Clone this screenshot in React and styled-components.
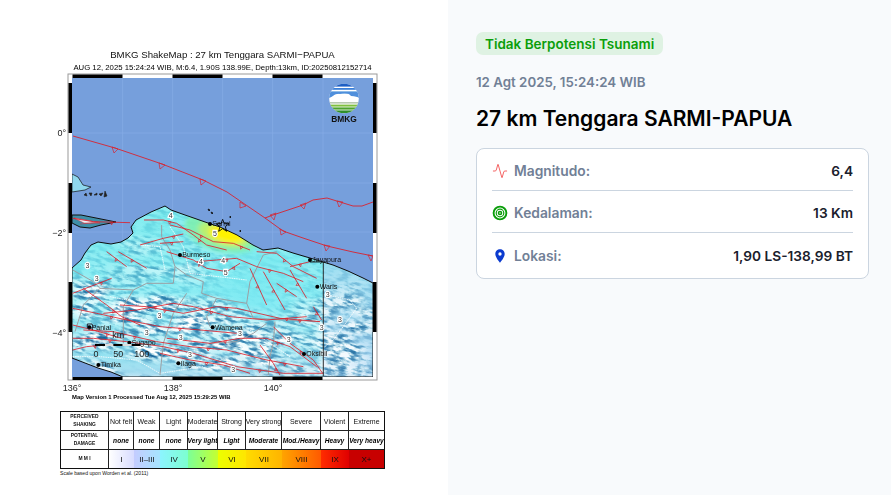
import React from "react";
import styled, { createGlobalStyle } from "styled-components";
import { Activity } from "lucide-react";
import { MdLocationOn } from "react-icons/md";

const GlobalStyle = createGlobalStyle`
  html, body { margin: 0; padding: 0; background: #fff; }
  body { font-family: Inter, "Liberation Sans", sans-serif; }
`;

const Page = styled.div`
  display: grid;
  grid-template-columns: 448px 1fr;
  height: 495px;
  overflow: hidden;
`;

/* left: the shakemap picture */
const MapPane = styled.div`
  background: #fff;
  padding: 45px 0 0 50px;
`;

const MapSvg = styled.svg`
  display: block;
  width: 340px;
  height: 356px;
  filter: blur(0.3px);
`;

const Title = styled.text`
  font: 9.65px "Liberation Sans", sans-serif;
  fill: #111;
  text-anchor: middle;
`;

const SubTitle = styled(Title)`
  font-size: 7.76px;
  fill: #000;
`;

const AxisLabel = styled.text`
  font: 9px "Liberation Sans", sans-serif;
  fill: #222;
  text-anchor: ${(p) => p.$anchor || "middle"};
`;

const City = styled.text`
  font: 21px "Liberation Sans", sans-serif;
  fill: #111;
`;

const Contour = styled.text`
  font: 21px "Liberation Sans", sans-serif;
  fill: #333;
  text-anchor: middle;
  stroke: #fff;
  stroke-width: 7px;
  paint-order: stroke;
`;

const ScaleText = styled.text`
  font: 27px "Liberation Sans", sans-serif;
  fill: #222;
  text-anchor: middle;
`;

const LogoText = styled.text`
  font: bold 8.4px "Liberation Sans", sans-serif;
  fill: #111;
  text-anchor: middle;
`;

const Caption = styled.text`
  font: bold 5.9px "Liberation Sans", sans-serif;
  fill: #000;
`;

const Legend = styled.div`
  display: grid;
  grid-template-columns: 48px 25px 26px 28px 30px 28px 36px 39px 28px 35px;
  grid-template-rows: 19px 19px 18px;
  width: 325px;
  margin: 10px 0 0 10px;
  border: 1px solid #111;
  box-sizing: border-box;
  font-family: "Liberation Sans", sans-serif;
  filter: blur(0.2px);
`;

const Cell = styled.div`
  display: flex;
  align-items: center;
  justify-content: center;
  text-align: center;
  overflow: hidden;
  white-space: nowrap;
  box-sizing: border-box;
  border-right: 1px solid #222;
  border-bottom: 1px solid #222;
  font-size: 7px;
  color: #111;
  &:nth-child(10n) { border-right: 0; }
  &:nth-child(n + 21) { border-bottom: 0; }
`;

const HeadCell = styled(Cell)`
  font-size: 4.9px;
  font-weight: bold;
  line-height: 8px;
  white-space: normal;
`;

const DamageCell = styled(Cell)`
  font-size: 6.6px;
  font-weight: bold;
  font-style: italic;
  color: #000;
`;

const MmiCell = styled(Cell)`
  font-size: 8px;
  background: ${(p) => p.$bg};
  border-right: 0;
`;

const ScaleNote = styled.div`
  margin: 0 0 0 10px;
  font: 5.1px/8px "Liberation Sans", sans-serif;
  color: #111;
`;

/* right: event details */
const InfoPane = styled.div`
  background: #f8fafc;
  padding: 32px 22px 0 28px;
`;

const Badge = styled.div`
  display: inline-block;
  height: 23px;
  line-height: 25px;
  padding: 0 9px;
  border-radius: 7px;
  background: #dff2e3;
  color: #0a9e0a;
  font-size: 13.5px;
  font-weight: 600;
`;

const DateText = styled.div`
  margin-top: 17px;
  font-size: 13.3px;
  line-height: 20px;
  font-weight: 600;
  color: #718096;
`;

const Heading = styled.h1`
  margin: 13px 0 0;
  font-size: 21px;
  line-height: 28px;
  font-weight: 600;
  color: #000;
`;

const Card = styled.div`
  margin-top: 15px;
  padding: 0 15px;
  height: 131px;
  box-sizing: border-box;
  background: #fff;
  border: 1px solid #cbd5e0;
  border-radius: 8px;
`;

const Row = styled.div`
  display: flex;
  align-items: center;
  box-sizing: border-box;
  height: 42px;
  padding-top: 3px;
  border-bottom: 1px solid #cbd5e0;
  &:last-child { border-bottom: 0; height: 45px; padding-top: 1px; }
`;

const IconBox = styled.span`
  display: flex;
  width: 16px;
  height: 16px;
  margin-right: 6px;
  color: ${(p) => p.$color};
`;

const Label = styled.span`
  font-size: 13.8px;
  font-weight: 600;
  color: #718096;
`;

const Value = styled.span`
  margin-left: auto;
  font-size: 13.7px;
  font-weight: 600;
  color: #1a202c;
`;

const BullseyeIcon = () => (
  <svg width="16" height="16" viewBox="0 0 16 16" fill="none" stroke="currentColor">
    <circle cx="8" cy="8" r="6.4" strokeWidth="1.9" />
    <circle cx="8" cy="8" r="3.8" strokeWidth="1.2" />
    <circle cx="8" cy="8" r="1.5" strokeWidth="1.6" />
  </svg>
);

const LAND =
  "72,268 81,260 85,253 91,245 98,242 111,244 121,242 128,238 133,233 131,227 136,220 151,212 165,206 171,210 185,215 208,223 220,227 237,235 245,240 253,245 263,250 271,249 278,248 293,253 310,258 333,265 348,271 363,278 373,283 373,377 123,377 111,372 98,368 85,363 72,358";
const ISLAND_A = "72,215 81,215 101,219 116,222 101,225 90,228 80,227 72,223";
const ISLAND_B = "72,174 78,177 83,185 91,187 85,190 72,192";

// the inland lines below are read off in 3x coordinates, see InlandLayer
const FAULTS = [
  "270,105 340,85 400,72",
  "330,100 400,95",
  "282,30 340,30 380,40 430,75 470,105 530,120",
  "360,45 420,60 490,95 550,100 600,120",
  "170,125 230,170",
  "205,125 290,175",
  "350,125 430,150 470,175 530,185 570,160",
  "440,155 500,150 560,145 620,170 700,190 760,215",
  "620,125 680,130 730,170 800,205",
  "600,175 650,285",
  "640,185 705,300",
  "680,220 740,260",
  "720,180 770,265",
  "790,290 815,330",
  "68,250 120,230 185,205",
  "100,235 170,285 215,320 270,345",
  "68,295 140,310 230,330 330,350 450,360 560,370",
  "160,310 260,300 370,280 430,290 540,320 650,330 770,320",
  "210,285 290,290 400,310 500,290 560,295 690,325 810,335",
  "68,385 130,385 230,395 340,410 430,430 560,470 700,490 820,490",
  "100,360 190,365 320,395 420,410 530,420 650,450 760,470",
  "68,420 110,410 160,405",
  "350,385 480,400 570,385 650,385 720,410 800,470",
  "630,405 670,460 690,495",
  "670,350 720,400 790,450 818,490",
  "330,430 420,450 520,465 600,490",
  "68,345 130,360 215,385",
  "720,170 780,155",
  "68,25 130,35 240,38",
];

const BORDERS = [
  "335,45 335,80 360,120 375,170 410,195 460,215 455,250 500,265 590,280 600,215 640,135 680,125",
  "68,180 130,215 150,235 250,240 290,220 370,220 375,170",
  "150,235 100,285 75,365",
  "250,240 220,290 220,400",
  "410,250 370,310 340,400 330,495",
  "500,265 470,320 480,350",
  "590,280 610,325 810,335",
  "675,335 670,400 660,440 655,495",
  "480,400 560,395 610,370 650,340",
];

const WHITE_LINES = [
  "360,50 400,110 420,190 590,210",
  "835,255 900,270 920,295 850,390 822,412",
  "270,105 330,110 345,180",
  "68,440 150,440 260,450 330,490 460,470",
  "180,260 230,270 300,300",
  "600,360 660,400 720,440",
];

const CITIES = [
  ["Burmeso", 390, 135],
  ["Jayapura", 780, 150],
  ["Waris", 802, 230],
  ["Wamena", 488, 352],
  ["Oksibil", 762, 432],
  ["Sugapo", 238, 398],
  ["Paniai", 118, 352],
  ["Timika", 145, 465],
  ["Ilaga", 385, 460],
  ["Sarmi", 480, 42],
];

const CONTOURS = [
  ["3", 112, 167], ["3", 140, 205], ["3", 328, 317], ["3", 290, 367],
  ["3", 392, 384], ["3", 420, 435], ["3", 570, 372], ["3", 716, 388],
  ["3", 870, 328], ["3", 833, 253], ["3", 815, 352], ["3", 550, 480],
  ["4", 453, 155], ["4", 520, 152], ["5", 527, 188], ["4", 362, 17], ["5", 495, 70],
];

// little open triangle on every other segment of a fault
const barbs = (points) => {
  const pts = points.split(" ").map((p) => p.split(",").map(Number));
  return pts
    .slice(1)
    .map((b, i) => {
      const a = pts[i];
      const len = Math.hypot(b[0] - a[0], b[1] - a[1]) || 1;
      const ux = (b[0] - a[0]) / len;
      const uy = (b[1] - a[1]) / len;
      const mx = (a[0] + b[0]) / 2;
      const my = (a[1] + b[1]) / 2;
      return `${mx - ux * 4},${my - uy * 4} ${mx + ux * 4},${my + uy * 4} ${mx - uy * 8},${my + ux * 8}`;
    })
    .filter((_, i) => i % 2 === 1 || pts.length === 2);
};

const TRENCH_BARBS = [
  "112,147 118,149 114,153", "159,163 165,165 160,169", "200,179 206,181 201,185",
  "240,202 246,206 240,208", "270,215 276,213 274,220", "300,205 306,203 304,209",
  "337,201 343,202 339,207", "280,229 286,232 281,235", "324,245 330,246 326,251",
  "368,255 373,256 371,261",
];

const InlandLayer = () => (
  <g transform="translate(50 210) scale(0.3333)" fill="none" strokeLinejoin="round">
    {WHITE_LINES.map((p) => (
      <polyline key={p} points={p} stroke="#fff" strokeWidth="2.4" strokeDasharray="5 2" />
    ))}
    {BORDERS.map((p) => (
      <polyline key={p} points={p} stroke="#9b9fa3" strokeWidth="3" />
    ))}
    {FAULTS.map((p) => (
      <g key={p} stroke="#dc1f2b" strokeWidth="2.5">
        <polyline points={p} />
        {barbs(p).map((t) => (
          <polygon key={t} points={t} strokeWidth="2" />
        ))}
      </g>
    ))}
    <polyline points="780,156 820,156 820,498" stroke="#111" strokeWidth="2.6" />
  </g>
);

const MapLabels = () => (
  <g transform="translate(50 210) scale(0.3333)">
    {CONTOURS.map(([n, x, y]) => (
      <Contour key={`${x}-${y}`} x={x} y={y + 7}>{n}</Contour>
    ))}
    {CITIES.map(([name, x, y]) => (
      <g key={name}>
        <circle cx={x} cy={y} r="6" fill="#000" />
        <City x={x + 7} y={y + 7}>{name}</City>
      </g>
    ))}
    <rect x="135" y="402" width="30" height="6" fill="#000" />
    <rect x="165" y="402" width="25" height="6" fill="#ddd" />
    <rect x="190" y="402" width="28" height="6" fill="#000" />
    <rect x="218" y="402" width="27" height="6" fill="#ddd" />
    <rect x="245" y="402" width="27" height="6" fill="#000" />
    <ScaleText x="205" y="385">km</ScaleText>
    <ScaleText x="138" y="441">0</ScaleText>
    <ScaleText x="205" y="441">50</ScaleText>
    <ScaleText x="275" y="441">100</ScaleText>
    <path d="M112 342h14l4 10-14 6-4-6z" fill="none" stroke="#223" strokeWidth="3" />
    <path d="M518 28l5 13h14l-11 9 4 14-12-8-12 8 4-14-11-9h14z" fill="none" stroke="#000" strokeWidth="2.6" />
  </g>
);

const BmkgLogo = () => (
  <g>
    <clipPath id="logoClip">
      <circle cx="344" cy="98.5" r="14.8" />
    </clipPath>
    <g clipPath="url(#logoClip)">
      <rect x="328" y="83" width="32" height="31" fill="#fff" />
      <rect x="328" y="83" width="32" height="3.6" fill="#1f5fc4" />
      <rect x="328" y="88" width="32" height="1.8" fill="#3b7fd8" />
      <rect x="328" y="91" width="32" height="3" fill="#8fbce8" />
      <path d="M329 98c4-1 6-5 11-4 4-2 9-1 11 2 4 0 7 1 8 2v-6h-30z" fill="#4f8fdc" />
      <rect x="328" y="102" width="32" height="1.6" fill="#b8c9b0" />
      <rect x="328" y="104.6" width="32" height="2" fill="#7fbf3f" />
      <rect x="328" y="107.4" width="32" height="2.2" fill="#4da32e" />
      <rect x="328" y="110.4" width="32" height="3" fill="#2f8f2a" />
    </g>
  </g>
);

const AXIS_Y = [83, 183, 282];
const AXIS_X = [72.5, 172.5, 272.5];

const MapFrame = () => (
  <g>
    <rect x="68" y="74" width="309" height="306" fill="#fff" stroke="#9a9a9a" strokeWidth="1" />
    {AXIS_X.map((x) => (
      <g key={x}>
        <rect x={x} y="74.5" width="50" height="3.5" fill="#000" />
        <rect x={x} y="376.5" width="50" height="3.5" fill="#000" />
      </g>
    ))}
    {AXIS_Y.map((y) => (
      <g key={y}>
        <rect x="68.5" y={y} width="3.5" height="50" fill="#000" />
        <rect x="373" y={y} width="3.5" height="50" fill="#000" />
      </g>
    ))}
  </g>
);

const ShakeMap = () => (
  <MapSvg viewBox="50 45 340 356">
    <defs>
      <clipPath id="landClip">
        <polygon points={LAND} />
      </clipPath>
      <clipPath id="mapClip">
        <rect x="72" y="78" width="301" height="299" />
      </clipPath>
      <linearGradient id="landBase" x1="0" y1="0" x2="0" y2="1">
        <stop offset="0" stopColor="#74ecee" />
        <stop offset="0.6" stopColor="#7ceaf3" />
        <stop offset="0.85" stopColor="#8fe4f2" />
        <stop offset="1" stopColor="#a8dcf0" />
      </linearGradient>
      <linearGradient id="eastBase" x1="0" y1="0" x2="0" y2="1">
        <stop offset="0" stopColor="#86e0f0" />
        <stop offset="1" stopColor="#a9d4f2" />
      </linearGradient>
      <filter id="hillShade" x="0" y="0" width="100%" height="100%" colorInterpolationFilters="sRGB">
        <feTurbulence type="fractalNoise" baseFrequency="0.1 0.3" numOctaves="4" seed="11" />
        <feColorMatrix values="1 0 0 0 0 1 0 0 0 0 1 0 0 0 0 0 0 0 0 1" />
        <feComponentTransfer>
          <feFuncR type="table" tableValues="0.1 0.1 0.1 0.14 0.35 0.7 1 1 1 1 1" />
          <feFuncG type="table" tableValues="0.4 0.4 0.4 0.44 0.6 0.85 1 1 1 1 1" />
          <feFuncB type="table" tableValues="0.6 0.6 0.6 0.64 0.75 0.9 1 1 1 1 1" />
          <feFuncA type="table" tableValues="1 1 1 0.9 0.4 0 0.4 0.95 1 1 1" />
        </feComponentTransfer>
      </filter>
      {/* black blotches punched into the mask, so the ranges come in clusters */}
      <filter id="patches" x="0" y="0" width="100%" height="100%" colorInterpolationFilters="sRGB">
        <feTurbulence type="fractalNoise" baseFrequency="0.022 0.06" numOctaves="2" seed="5" />
        <feColorMatrix values="0 0 0 0 0 0 0 0 0 0 0 0 0 0 0 1 0 0 0 0" />
        <feComponentTransfer>
          <feFuncA type="table" tableValues="0 0 0 0 0 0.25 0.55 0.7 0.7 0.7 0.7" />
        </feComponentTransfer>
      </filter>
      <filter id="soft">
        <feGaussianBlur stdDeviation="9" />
      </filter>
      <filter id="softShake">
        <feGaussianBlur stdDeviation="2.5" />
      </filter>
      <mask id="mountains">
        <rect x="-100" y="-100" width="700" height="700" fill="#303030" />
        <polygon
          points="72,275 140,285 230,305 300,335 323,377 72,377"
          fill="#fff"
          filter="url(#soft)"
        />
        <polygon points="120,240 200,260 250,285 200,280 120,270" fill="#aaa" filter="url(#soft)" />
        <polygon points="290,300 373,290 373,377 320,377" fill="#ddd" filter="url(#soft)" />
        <polygon points="190,268 275,265 295,310 240,300" fill="#111" filter="url(#soft)" />
        <polygon points="80,345 150,362 240,377 125,377" fill="#111" filter="url(#softShake)" />
        <rect x="60" y="195" width="320" height="190" filter="url(#patches)" />
      </mask>
    </defs>

    <Title x="222.5" y="58">BMKG ShakeMap : 27 km Tenggara SARMI−PAPUA</Title>
    <SubTitle x="222.5" y="69.5">AUG 12, 2025 15:24:24 WIB, M:6.4, 1.90S 138.99E, Depth:13km, ID:20250812152714</SubTitle>

    <MapFrame />
    <g clipPath="url(#mapClip)">
      <rect x="72" y="78" width="301" height="299" fill="#769fdc" />
      {[122.7, 172.7, 222.7, 272.7, 323].map((x) => (
        <line key={x} x1={x} x2={x} y1="78" y2="377" stroke="#86aee6" strokeWidth="0.7" />
      ))}
      {[133, 183, 232, 282, 332].map((y) => (
        <line key={y} x1="72" x2="373" y1={y} y2={y} stroke="#86aee6" strokeWidth="0.7" />
      ))}

      <polygon points={ISLAND_B} fill="#8fd8ee" stroke="#111" strokeWidth="0.7" />
      <polygon points={ISLAND_A} fill="#3f8fa8" stroke="#111" strokeWidth="1" />
      <path d="M74 218l12 2 14 3-16 0zM80 224l12-1 6-1" fill="#e8f6fa" stroke="#dc1f2b" strokeWidth="0.5" />
      <path d="M84 195l2-2 1 3zM89 193h3l-1 3zM94 195h3v-2zM99 194l4-1-2 3zM105 191l2 5-3 1z" fill="#222" stroke="#222" strokeWidth="0.6" />
      <path d="M208 209l2 1-1 1zM211 212l2 1-1 1zM230 216l1 1-1 1zM240 230l1 1-1 1z" fill="#111" stroke="#111" strokeWidth="0.8" />

      <g clipPath="url(#landClip)">
        <rect x="72" y="200" width="252" height="177" fill="url(#landBase)" />
        <rect x="323" y="200" width="50" height="177" fill="url(#eastBase)" />
        <g mask="url(#mountains)">
          <g transform="rotate(14 220 300)">
            <rect x="20" y="150" width="420" height="300" filter="url(#hillShade)" />
          </g>
        </g>
        <g transform="rotate(14 225 232)" filter="url(#softShake)">
          <ellipse cx="222" cy="233" rx="38" ry="19" fill="#7ef0b0" opacity="0.9" />
          <ellipse cx="225" cy="234" rx="27" ry="12" fill="#b9f070" />
          <ellipse cx="227" cy="234" rx="18" ry="8.5" fill="#fff200" />
        </g>
      </g>
      <polygon points={LAND} fill="none" stroke="#0c0c0c" strokeWidth="1" />

      <InlandLayer />
      <g fill="none" stroke="#d8232f" strokeWidth="0.9">
        <polyline points="73,136 115,148 162,164 203,180 227,192 265,218 283,231 303,238 327,246 353,252 373,256" />
        <polyline points="265,218 273,215 303,205 313,200 327,198 340,202 353,206 362,206 373,202" />
        {TRENCH_BARBS.map((t) => (
          <polygon key={t} points={t} strokeWidth="0.7" />
        ))}
      </g>
      <MapLabels />
      <BmkgLogo />
      <LogoText x="344" y="121.5">BMKG</LogoText>
    </g>

    <AxisLabel $anchor="end" x="66" y="136">0°</AxisLabel>
    <AxisLabel $anchor="end" x="66" y="236">−2°</AxisLabel>
    <AxisLabel $anchor="end" x="66" y="336">−4°</AxisLabel>
    <AxisLabel x="72" y="391">136°</AxisLabel>
    <AxisLabel x="173" y="391">138°</AxisLabel>
    <AxisLabel x="273" y="391">140°</AxisLabel>
    <Caption x="72" y="399">Map Version 1 Processed Tue Aug 12, 2025 15:29:25 WIB</Caption>
  </MapSvg>
);

const SHAKING = ["Not felt", "Weak", "Light", "Moderate", "Strong", "Very strong", "Severe", "Violent", "Extreme"];
const DAMAGE = ["none", "none", "none", "Very light", "Light", "Moderate", "Mod./Heavy", "Heavy", "Very heavy"];
const MMI = [
  ["I", "linear-gradient(90deg, #fff, #d8dcff)"],
  ["II–III", "linear-gradient(90deg, #c4ccff, #a6e4ff)"],
  ["IV", "linear-gradient(90deg, #8cf4ff, #7cffd0)"],
  ["V", "linear-gradient(90deg, #7cff98, #c4ff30)"],
  ["VI", "linear-gradient(90deg, #ecff00, #ffe600)"],
  ["VII", "linear-gradient(90deg, #ffdc00, #ffb400)"],
  ["VIII", "linear-gradient(90deg, #ffa400, #ff5a00)"],
  ["IX", "linear-gradient(90deg, #ff2c00, #e00000)"],
  ["X+", "#c80000"],
];

const ShakeLegend = () => (
  <Legend>
    <HeadCell>PERCEIVED<br />SHAKING</HeadCell>
    {SHAKING.map((s) => <Cell key={s}>{s}</Cell>)}
    <HeadCell>POTENTIAL<br />DAMAGE</HeadCell>
    {DAMAGE.map((d, i) => <DamageCell key={i}>{d}</DamageCell>)}
    <HeadCell>M M I</HeadCell>
    {MMI.map(([m, bg]) => <MmiCell key={m} $bg={bg}>{m}</MmiCell>)}
  </Legend>
);

const App = () => (
  <Page>
    <GlobalStyle />
    <MapPane>
      <ShakeMap />
      <ShakeLegend />
      <ScaleNote>Scale based upon Worden et al. (2011)</ScaleNote>
    </MapPane>
    <InfoPane>
      <Badge>Tidak Berpotensi Tsunami</Badge>
      <DateText>12 Agt 2025, 15:24:24 WIB</DateText>
      <Heading>27 km Tenggara SARMI-PAPUA</Heading>
      <Card>
        <Row>
          <IconBox $color="#f56565"><Activity size={16} strokeWidth={1.5} /></IconBox>
          <Label>Magnitudo:</Label>
          <Value>6,4</Value>
        </Row>
        <Row>
          <IconBox $color="#0a9e0a"><BullseyeIcon /></IconBox>
          <Label>Kedalaman:</Label>
          <Value>13 Km</Value>
        </Row>
        <Row>
          <IconBox $color="#0b3bcf"><MdLocationOn size={16} /></IconBox>
          <Label>Lokasi:</Label>
          <Value>1,90 LS-138,99 BT</Value>
        </Row>
      </Card>
    </InfoPane>
  </Page>
);

export default App;
